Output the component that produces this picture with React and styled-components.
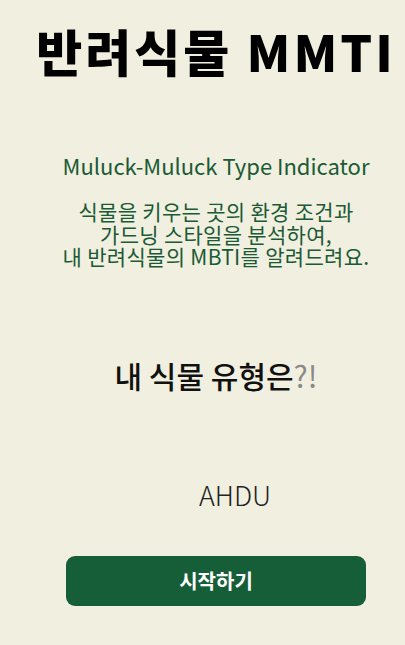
import React from "react";
import styled, { createGlobalStyle } from "styled-components";

const Global = createGlobalStyle`
  html, body { margin: 0; padding: 0; background: #f1efdf; }
  body { font-family: "Noto Sans CJK KR", "Noto Sans", sans-serif; }
`;

const Page = styled.main`
  min-height: 645px;
  box-sizing: border-box;
  display: flex;
  flex-direction: column;
  align-items: center;
  padding: 17px 0 0 27px;
  overflow: hidden;
`;

const Title = styled.h1`
  margin: 0;
  font-size: 50px;
  line-height: 66px;
  font-weight: 900;
  color: #000;
  white-space: nowrap;
  letter-spacing: 3px;
`;

const Subtitle = styled.p`
  margin: 68px 0 0;
  font-size: 22px;
  line-height: 28px;
  color: #1a5a36;
  font-weight: 400;
  white-space: nowrap;
`;

const Description = styled.p`
  margin: 21px 0 0;
  font-size: 21px;
  line-height: 22.5px;
  color: #1a5a36;
  text-align: center;
  font-weight: 400;
  white-space: nowrap;
  letter-spacing: 0.3px;
`;

const Question = styled.h2`
  margin: 87px 0 0;
  font-size: 30px;
  line-height: 40px;
  font-weight: 500;
  color: #111;
`;

const Mark = styled.span`
  color: #8a8a8a;
  font-weight: 400;
`;

const Result = styled.div`
  margin: 83px 0 0 38px;
  font-size: 27px;
  line-height: 34px;
  font-weight: 300;
  color: #222;
`;

const StartButton = styled.button`
  margin-top: 44px;
  width: 300px;
  height: 50px;
  border: none;
  border-radius: 9px;
  background: #165e38;
  color: #fff;
  font-family: inherit;
  font-size: 20px;
  font-weight: 700;
  cursor: pointer;
`;

export default function App() {
  return (
    <>
      <Global />
      <Page>
        <Title>반려식물 MMTI</Title>
        <Subtitle>Muluck-Muluck Type Indicator</Subtitle>
        <Description>
          식물을 키우는 곳의 환경 조건과
          <br />
          가드닝 스타일을 분석하여,
          <br />
          내 반려식물의 MBTI를 알려드려요.
        </Description>
        <Question>
          내 식물 유형은<Mark>?!</Mark>
        </Question>
        <Result>AHDU</Result>
        <StartButton>시작하기</StartButton>
      </Page>
    </>
  );
}
